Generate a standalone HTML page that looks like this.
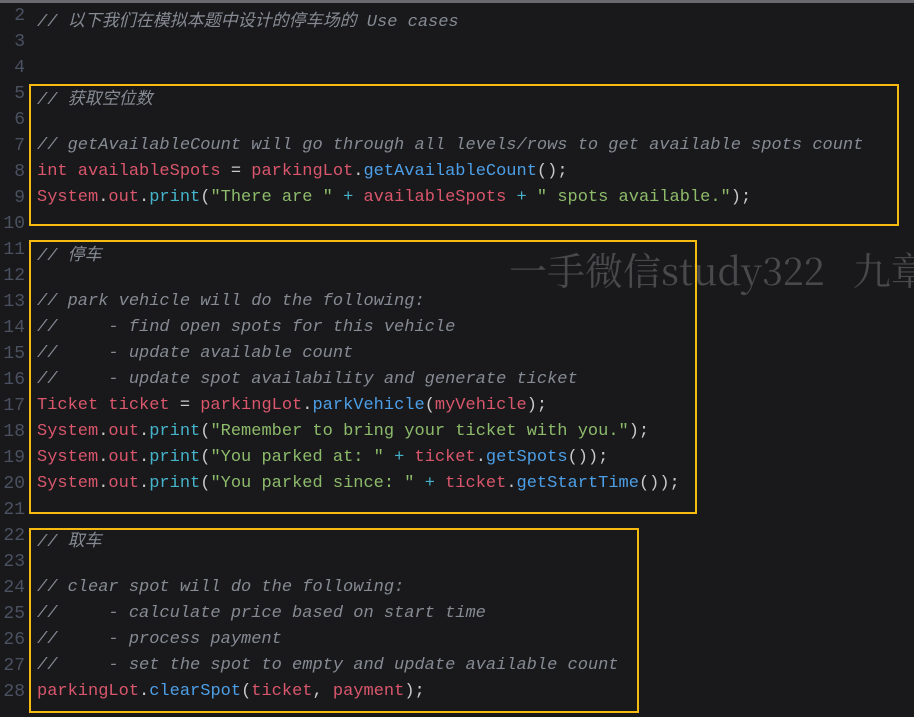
<!DOCTYPE html>
<html><head><meta charset="utf-8"><style>
html,body{margin:0;padding:0;}
body{width:914px;height:717px;background:#19191c;position:relative;overflow:hidden;font-family:"Liberation Mono","Noto Sans CJK SC",monospace;font-size:17px;}
.top{position:absolute;left:0;top:0;width:914px;height:3px;background:#6a6a6e;}
.ln{position:absolute;left:0;width:25px;text-align:right;color:#4a5160;font-size:18px;}
.code{position:absolute;left:37px;white-space:pre;color:#c9c9c9;}
.c{color:#858a93;font-style:italic;}
.r{color:#d9566b;}
.b{color:#4c9fe6;}
.cy{color:#45b3c9;}
.g{color:#8dbb6a;}
.box{position:absolute;border:2px solid #f7bb0f;}
.wm{position:absolute;left:509px;top:241px;color:#49494c;white-space:nowrap;font-family:"Noto Serif CJK SC","Liberation Serif",serif;font-size:38px;}
.wm .cj{font-size:38px;}
</style></head><body>
<div class="top"></div>
<div class="wm"><span class="cj">一手微信</span>study322<span class="cj" style="margin-left:28px">九章</span></div>

<div class="ln" style="top:6px">2</div><div class="code c" style="top:6px">// 以下我们在模拟本题中设计的停车场的 Use cases</div>
<div class="ln" style="top:32px">3</div>
<div class="ln" style="top:58px">4</div>
<div class="ln" style="top:84px">5</div><div class="code c" style="top:84px">// 获取空位数</div>
<div class="ln" style="top:110px">6</div>
<div class="ln" style="top:136px">7</div><div class="code c" style="top:136px">// getAvailableCount will go through all levels/rows to get available spots count</div>
<div class="ln" style="top:162px">8</div><div class="code" style="top:162px"><span class="r">int availableSpots</span> = <span class="r">parkingLot</span>.<span class="b">getAvailableCount</span>();</div>
<div class="ln" style="top:188px">9</div><div class="code" style="top:188px"><span class="r">System</span>.<span class="r">out</span>.<span class="cy">print</span>(<span class="g">"There are "</span> <span class="cy">+</span> <span class="r">availableSpots</span> <span class="cy">+</span> <span class="g">" spots available."</span>);</div>
<div class="ln" style="top:214px">10</div>
<div class="ln" style="top:240px">11</div><div class="code c" style="top:240px">// 停车</div>
<div class="ln" style="top:266px">12</div>
<div class="ln" style="top:292px">13</div><div class="code c" style="top:292px">// park vehicle will do the following:</div>
<div class="ln" style="top:318px">14</div><div class="code c" style="top:318px">//     - find open spots for this vehicle</div>
<div class="ln" style="top:344px">15</div><div class="code c" style="top:344px">//     - update available count</div>
<div class="ln" style="top:370px">16</div><div class="code c" style="top:370px">//     - update spot availability and generate ticket</div>
<div class="ln" style="top:396px">17</div><div class="code" style="top:396px"><span class="r">Ticket ticket</span> = <span class="r">parkingLot</span>.<span class="b">parkVehicle</span>(<span class="r">myVehicle</span>);</div>
<div class="ln" style="top:422px">18</div><div class="code" style="top:422px"><span class="r">System</span>.<span class="r">out</span>.<span class="cy">print</span>(<span class="g">"Remember to bring your ticket with you."</span>);</div>
<div class="ln" style="top:448px">19</div><div class="code" style="top:448px"><span class="r">System</span>.<span class="r">out</span>.<span class="cy">print</span>(<span class="g">"You parked at: "</span> <span class="cy">+</span> <span class="r">ticket</span>.<span class="b">getSpots</span>());</div>
<div class="ln" style="top:474px">20</div><div class="code" style="top:474px"><span class="r">System</span>.<span class="r">out</span>.<span class="cy">print</span>(<span class="g">"You parked since: "</span> <span class="cy">+</span> <span class="r">ticket</span>.<span class="b">getStartTime</span>());</div>
<div class="ln" style="top:500px">21</div>
<div class="ln" style="top:526px">22</div><div class="code c" style="top:526px">// 取车</div>
<div class="ln" style="top:552px">23</div>
<div class="ln" style="top:578px">24</div><div class="code c" style="top:578px">// clear spot will do the following:</div>
<div class="ln" style="top:604px">25</div><div class="code c" style="top:604px">//     - calculate price based on start time</div>
<div class="ln" style="top:630px">26</div><div class="code c" style="top:630px">//     - process payment</div>
<div class="ln" style="top:656px">27</div><div class="code c" style="top:656px">//     - set the spot to empty and update available count</div>
<div class="ln" style="top:682px">28</div><div class="code" style="top:682px"><span class="r">parkingLot</span>.<span class="b">clearSpot</span>(<span class="r">ticket</span>, <span class="r">payment</span>);</div>

<div class="box" style="left:29px;top:84px;width:866px;height:138px"></div>
<div class="box" style="left:29px;top:240px;width:664px;height:270px"></div>
<div class="box" style="left:29px;top:528px;width:606px;height:181px"></div>
</body></html>
